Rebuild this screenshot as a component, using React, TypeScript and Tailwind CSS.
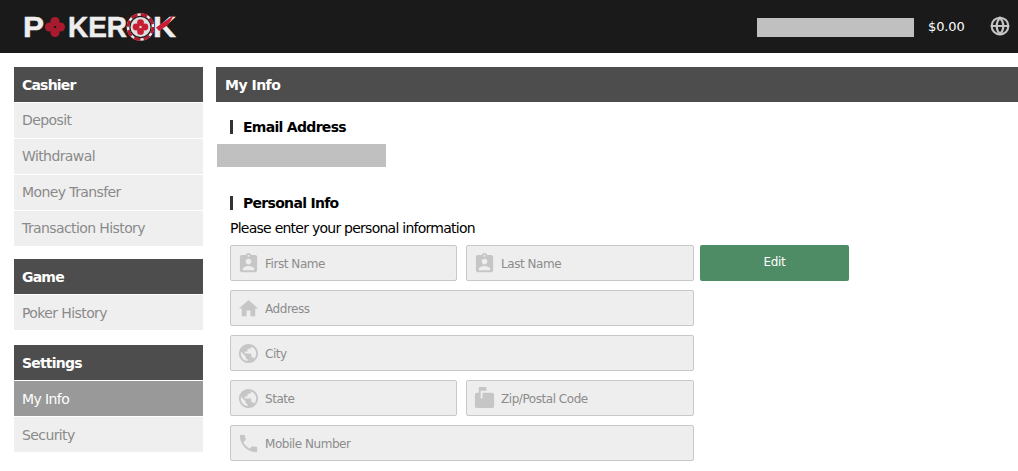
import type { ReactNode } from "react";
import {
  MdAssignmentInd,
  MdHome,
  MdMarkunreadMailbox,
  MdPhone,
  MdPublic,
} from "react-icons/md";
import { Globe } from "lucide-react";

const font = "font-['DejaVu_Sans','Liberation_Sans',sans-serif]";

function Logo() {
  return (
    <svg width="156" height="33" viewBox="0 0 156 33" className="block">
      <defs>
        <radialGradient id="glow">
          <stop offset="0%" stopColor="#5a1616" />
          <stop offset="100%" stopColor="#1a1a1a" />
        </radialGradient>
      </defs>
      <rect x="96" y="0" width="46" height="33" fill="url(#glow)" opacity="0.7" />
      <g
        fontFamily="'Liberation Sans', sans-serif"
        fontWeight="700"
        fontSize="30"
        fill="#eeeeee"
        stroke="#eeeeee"
        strokeWidth="0.5"
      >
        <text x="1" y="27" textLength="21" lengthAdjust="spacingAndGlyphs">P</text>
        <text x="46" y="27" textLength="59" lengthAdjust="spacingAndGlyphs">KER</text>
        <text x="131" y="27" textLength="23" lengthAdjust="spacingAndGlyphs">K</text>
      </g>
      {/* club pip */}
      <g fill="#a81a2e">
        <circle cx="33" cy="11.5" r="4.6" />
        <circle cx="27.5" cy="17" r="4.6" />
        <circle cx="38.5" cy="17" r="4.6" />
        <circle cx="33" cy="22.5" r="4.6" />
      </g>
      {/* chip */}
      <circle cx="118.5" cy="17" r="14" fill="#1a1a1a" />
      <circle cx="118.5" cy="17" r="12.5" fill="none" stroke="#e8e8e8" strokeWidth="2.6" />
      <circle cx="118.5" cy="17" r="12.5" fill="none" stroke="#b3182c" strokeWidth="2.8" strokeDasharray="6.5 3.3" />
      <circle cx="118.5" cy="17" r="10" fill="#dedede" />
      <g fill="#c81e34">
        <circle cx="118.5" cy="12.6" r="3.4" />
        <circle cx="114.1" cy="17" r="3.4" />
        <circle cx="122.9" cy="17" r="3.4" />
        <circle cx="118.5" cy="21.4" r="3.4" />
      </g>
      <path d="M134 17.5 L152 5 L146 15 L137 21 Z" fill="#c81e34" />
    </svg>
  );
}

function Header() {
  return (
    <header className="h-[53px] bg-[#1a1a1a] flex items-center pl-[22px]">
      <Logo />
      <div className="ml-auto w-[157px] h-[19px] mt-[2px] bg-[#c0c0c0]" />
      <span className="ml-[14px] w-[62px] text-white text-[13px] tracking-[-0.1px]">$0.00</span>
      <Globe size={20} strokeWidth={2.5} className="text-[#c4c4c4] mr-[8px] mb-[2px]" />
    </header>
  );
}

function NavGroup({
  title,
  items,
  active,
  className,
}: {
  title: string;
  items: string[];
  active?: string;
  className?: string;
}) {
  const nudge = title === "Cashier" ? "" : "pt-px";
  return (
    <div className={className}>
      <div className="h-[35px] bg-[#4d4d4d] text-white font-bold text-[14px] tracking-[-0.8px] flex items-center pl-[8px] pt-[2px]">
        {title}
      </div>
      {items.map((item) => (
        <div
          key={item}
          className={
            item === active
              ? `mt-px h-[35px] bg-[#999999] text-white text-[14px] tracking-[-0.6px] flex items-center pl-[8px] ${nudge}`
              : `mt-px h-[35px] bg-[#efefef] text-[#8a8a8a] text-[14px] tracking-[-0.6px] flex items-center pl-[8px] ${nudge}`
          }
        >
          {item}
        </div>
      ))}
    </div>
  );
}

function SectionTitle({ children }: { children: ReactNode }) {
  return (
    <div className="ml-[14px] border-l-[3px] border-[#333333] pl-[10px] h-[14px] flex items-center text-black font-bold text-[14px] tracking-[-0.7px]">
      {children}
    </div>
  );
}

function Field({
  icon,
  label,
  className,
}: {
  icon: ReactNode;
  label: string;
  className: string;
}) {
  return (
    <div
      className={`${className} h-[36px] bg-[#eeeeee] border border-[#c8c8c8] rounded-[2px] flex items-center pl-[8px] text-[12px] tracking-[-0.45px] text-[#8c8c8c]`}
    >
      <span className="w-[18px] h-[20px] flex items-center justify-center text-[#c6c6c6] text-[23px] mr-[8px] [&>svg]:shrink-0">
        {icon}
      </span>
      <span className="pt-[2px]">{label}</span>
    </div>
  );
}

export default function App() {
  return (
    <div className={`${font} w-[1018px] h-[471px] overflow-hidden bg-white`}>
      <Header />
      <div className="flex pt-[14px] pl-[14px] gap-[13px]">
        <aside className="w-[189px] shrink-0">
          <NavGroup
            title="Cashier"
            items={["Deposit", "Withdrawal", "Money Transfer", "Transaction History"]}
            className="mb-[13px]"
          />
          <NavGroup title="Game" items={["Poker History"]} className="mb-[15px]" />
          <NavGroup title="Settings" items={["My Info", "Security"]} active="My Info" />
        </aside>
        <main className="flex-1 min-w-0">
          <div className="h-[35px] bg-[#4d4d4d] text-white font-bold text-[14px] tracking-[-0.5px] flex items-center pl-[9px] pt-[2px]">
            My Info
          </div>
          <div className="mt-[18px]">
            <SectionTitle>Email Address</SectionTitle>
          </div>
          <div className="mt-[10px] ml-px w-[169px] h-[23px] bg-[#c0c0c0]" />
          <div className="mt-[29px]">
            <SectionTitle>Personal Info</SectionTitle>
          </div>
          <p className="ml-[14px] mt-[10px] h-[17px] leading-[17px] text-[14px] tracking-[-0.75px] text-black">
            Please enter your personal information
          </p>
          <div className="ml-[14px] mt-[8px] w-[633px] flex flex-col gap-[9px]">
            <div className="flex items-start">
              <Field icon={<MdAssignmentInd />} label="First Name" className="w-[227px]" />
              <Field icon={<MdAssignmentInd />} label="Last Name" className="w-[228px] ml-[9px]" />
              <button className="ml-[6px] w-[149px] h-[36px] bg-[#4d8c64] rounded-[2px] text-white text-[12px] tracking-[-0.3px] pb-[2px]">
                Edit
              </button>
            </div>
            <Field icon={<MdHome />} label="Address" className="w-[464px]" />
            <Field icon={<MdPublic />} label="City" className="w-[464px]" />
            <div className="flex">
              <Field icon={<MdPublic />} label="State" className="w-[227px]" />
              <Field icon={<MdMarkunreadMailbox />} label="Zip/Postal Code" className="w-[228px] ml-[9px]" />
            </div>
            <Field icon={<MdPhone />} label="Mobile Number" className="w-[464px]" />
          </div>
        </main>
      </div>
    </div>
  );
}
